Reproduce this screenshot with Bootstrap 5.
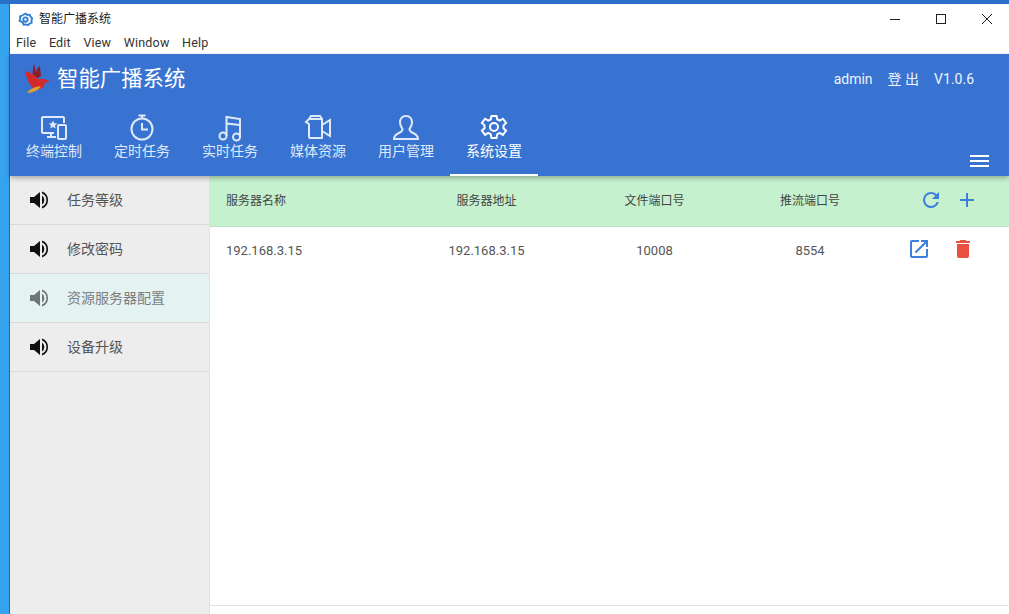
<!DOCTYPE html>
<html lang="zh">
<head>
<meta charset="utf-8">
<title>智能广播系统</title>
<link href="https://cdn.jsdelivr.net/npm/bootstrap@5.3.0/dist/css/bootstrap.min.css" rel="stylesheet">
<style>
html,body{height:614px;overflow:hidden}
body{background:#36a3ee;font-family:Roboto,"Noto Sans CJK SC",sans-serif;color:#333;padding:4px 0 0 10px}
body::before{content:"";position:absolute;left:0;right:0;top:0;height:4px;background:#2a6fc9}
.app-win{height:610px;background:#fff;box-shadow:-1px 0 0 #1d6aa8;position:relative}
.title-bar{height:30px;font-size:12px;color:#222}
.title-bar .win-title{margin-left:6px;line-height:30px}
.win-btns{margin-left:auto;width:138px}
.win-btns span{width:46px;height:30px;padding-left:2px}
.menu-bar{height:20px;font-size:12.5px;color:#333;padding-left:6px;gap:12.5px;line-height:18px;letter-spacing:.2px}
.app-head{height:122px;background:#3873d1;color:#fff;box-shadow:0 2px 5px rgba(0,0,0,.3);position:relative;z-index:2}
.head-top{height:52px;padding:0 35px 0 14px}
.head-top .brand{font-size:21.4px;margin-left:5px;line-height:50px}
.head-info{margin-left:auto;font-size:14px;gap:15px;line-height:50px;color:#eef4fd}
.tab-row{height:70px;position:relative}
.tab-item{width:88px;height:70px;font-size:14px;color:#dfe9f8;text-align:center;padding-top:7px;line-height:16px}
.tab-item svg{display:block;margin:0 auto;width:30px;height:30px}
.tab-item.on{color:#fff;border-bottom:2px solid #fff}
.burger{position:absolute;right:20px;top:49px;width:19px;height:12px;border-top:2px solid #fff;border-bottom:2px solid #fff}
.burger::after{content:"";position:absolute;left:0;right:0;top:3px;height:2px;background:#fff}
.app-main{height:438px}
.side-nav{width:200px;background:#ededed;border-right:1px solid #e2e2e2;flex:none}
.side-row{height:49px;border-bottom:1px solid #d9d9d9;font-size:14px;color:#555;padding-left:17px}
.side-row svg{width:24px;height:24px;margin-right:16px;flex:none}
.side-row.on{background:#e4f2f2;color:#7d7d7d}
.side-row.on svg{opacity:.55}
.data-pane{position:relative;border-bottom:1px solid #e3e3e3;margin-bottom:8px}
.data-head,.data-line{font-size:12px;color:#555}
.data-head{height:51px;background:#c5f1ce;border-bottom:1px solid #bfe3c7;color:#444}
.data-line{height:47px;font-size:13px;color:#555}
.c-a{width:200px;padding-left:16px;flex:none}
.c-b{width:153px;text-align:center;flex:none}
.c-c{width:183px;text-align:center;flex:none}
.c-d{width:128px;text-align:center;flex:none}
.c-e{flex:1;position:relative;height:24px}
.c-e svg{position:absolute;top:-1px;width:24px;height:24px}
.data-line .c-e svg{top:-2px}
</style>
</head>
<body>
<div class="app-win d-flex flex-column">
  <div class="title-bar d-flex align-items-center ps-2">
    <svg width="15" height="15" viewBox="0 0 24 24" fill="none" stroke="#2f7fd6" stroke-width="3"><path d="M12 2.500l3 2.200 3.600-.4 1.500 3.300 2.600 2.600-1.200 3.400.4 3.600-3.400 1.300-2.500 2.500-3.400-1.200-3.600.4-1.400-3.400L2.500 14l1.100-3.400L3.300 7l3.400-1.400z"/><circle cx="12" cy="12" r="3.500"/></svg>
    <span class="win-title">智能广播系统</span>
    <div class="win-btns d-flex">
      <span class="d-flex align-items-center justify-content-center"><svg width="12" height="12" viewBox="0 0 12 12"><path d="M1 6.500h10" stroke="#222" stroke-width="1"/></svg></span>
      <span class="d-flex align-items-center justify-content-center"><svg width="12" height="12" viewBox="0 0 12 12"><rect x="1.500" y="1.500" width="9" height="9" fill="none" stroke="#222" stroke-width="1"/></svg></span>
      <span class="d-flex align-items-center justify-content-center"><svg width="12" height="12" viewBox="0 0 12 12"><path d="M1 1l10 10M11 1L1 11" stroke="#222" stroke-width="1"/></svg></span>
    </div>
  </div>
  <div class="menu-bar d-flex"><span>File</span><span>Edit</span><span>View</span><span>Window</span><span>Help</span></div>
  <div class="app-head">
    <div class="head-top d-flex">
      <svg width="28" height="32" viewBox="0 0 28 32" class="mt-2"><path d="M10 2c1 3 1.500 5 2 8 1-3 2-5 4-6 0 4 1 7 1 10-3 3-6 2-8 0C8 10 9 6 10 2z" fill="#8c1f2b"/><path d="M1 9c5 1 10 4 13 8l6 0 6 2-5 2c-1 5-5 7-10 7C6 24 2 16 1 9z" fill="#d12b2b"/><path d="M3 31c3-4 7-6 14-7-2 4-8 7-14 7z" fill="#e8a02a"/></svg>
      <span class="brand">智能广播系统</span>
      <div class="head-info d-flex"><span>admin</span><span>登 出</span><span>V1.0.6</span></div>
    </div>
    <div class="tab-row d-flex">
      <div class="tab-item"><svg viewBox="0 0 30 30" fill="none" stroke="#dfe9f8" stroke-width="2"><path d="M15 20H4a1 1 0 0 1-1-1V5a1 1 0 0 1 1-1h20a1 1 0 0 1 1 1v5M8 24h9M12 20v4"/><rect x="19" y="12" width="8" height="14" rx="1"/><path d="M14 7.500l1.300 2.800 3 .3-2.300 2 .7 3-2.700-1.600-2.700 1.600.7-3-2.300-2 3-.3z" fill="#dfe9f8" stroke="none"/></svg>终端控制</div>
      <div class="tab-item"><svg viewBox="0 0 30 30" fill="none" stroke="#dfe9f8" stroke-width="2"><circle cx="15" cy="16" r="10.500"/><path d="M11.500 2.500h7M15 3v2.500M15 10v6.500h6"/></svg>定时任务</div>
      <div class="tab-item"><svg viewBox="0 0 30 30" fill="none" stroke="#dfe9f8" stroke-width="2"><circle cx="8" cy="23" r="3.500"/><circle cx="21.500" cy="24" r="3.500"/><path d="M11.500 23V4l13.500 2v18M11.500 10.500L25 12"/></svg>实时任务</div>
      <div class="tab-item"><svg viewBox="0 0 30 30" fill="none" stroke="#dfe9f8" stroke-width="2"><path d="M6 6h13v19H7a1 1 0 0 1-1-1V11L3 9zM6 6l2-3h9l2 3M19 12l8-5v16l-8-5"/></svg>媒体资源</div>
      <div class="tab-item"><svg viewBox="0 0 30 30" fill="none" stroke="#dfe9f8" stroke-width="2"><path d="M15 3c-4 0-6 3-6 6.500 0 3 1.500 5 2.500 6.500 0 2-1 3-3.500 4-3 1.300-5 3-5 6h24c0-3-2-4.700-5-6-2.500-1-3.500-2-3.500-4 1-1.500 2.500-3.500 2.500-6.500C21 6 19 3 15 3z"/></svg>用户管理</div>
      <div class="tab-item on"><svg viewBox="0 0 30 30" fill="none" stroke="#fff" stroke-width="2"><path d="M12.500 3h5l.8 3.500 2.500 1.100 3.100-1.900 3.200 4.200-2.600 2.500v2.800l2.600 2.500-3.200 4.200-3.100-1.900-2.500 1.100-.8 3.900h-5l-.8-3.900-2.500-1.100-3.100 1.900-3.200-4.200 2.600-2.500v-2.800L2.900 9.900l3.200-4.200 3.100 1.900 2.500-1.100z"/><circle cx="15" cy="14" r="4"/></svg>系统设置</div>
      <div class="burger"></div>
    </div>
  </div>
  <div class="app-main d-flex">
    <div class="side-nav">
      <div class="side-row d-flex align-items-center"><svg viewBox="0 0 24 24"><use href="#spk"/></svg>任务等级</div>
      <div class="side-row d-flex align-items-center"><svg viewBox="0 0 24 24"><use href="#spk"/></svg>修改密码</div>
      <div class="side-row on d-flex align-items-center"><svg viewBox="0 0 24 24"><use href="#spk"/></svg>资源服务器配置</div>
      <div class="side-row d-flex align-items-center"><svg viewBox="0 0 24 24"><use href="#spk"/></svg>设备升级</div>
    </div>
    <div class="data-pane flex-grow-1">
      <div class="data-head d-flex align-items-center">
        <div class="c-a">服务器名称</div><div class="c-b">服务器地址</div><div class="c-c">文件端口号</div><div class="c-d">推流端口号</div>
        <div class="c-e">
          <svg style="left:45px" viewBox="0 0 24 24"><path d="M17.650 6.350A7.950 7.950 0 0 0 12 4a8 8 0 1 0 7.730 10h-2.080A6 6 0 1 1 12 6c1.660 0 3.140.69 4.220 1.780L13 11h7V4z" fill="#3c80db"/></svg>
          <svg style="left:81px" viewBox="0 0 24 24"><path d="M19 13h-6v6h-2v-6H5v-2h6V5h2v6h6z" fill="#3c80db"/></svg>
        </div>
      </div>
      <div class="data-line d-flex align-items-center">
        <div class="c-a">192.168.3.15</div><div class="c-b">192.168.3.15</div><div class="c-c">10008</div><div class="c-d">8554</div>
        <div class="c-e">
          <svg style="left:33px" viewBox="0 0 24 24"><path d="M19 19H5V5h7V3H5a2 2 0 0 0-2 2v14a2 2 0 0 0 2 2h14a2 2 0 0 0 2-2v-7h-2zM14 3v2h3.590l-9.830 9.830 1.410 1.410L19 6.410V10h2V3z" fill="#3c80db"/></svg>
          <svg style="left:77px" viewBox="0 0 24 24"><path d="M6 19a2 2 0 0 0 2 2h8a2 2 0 0 0 2-2V7H6zM19 4h-3.500l-1-1h-5l-1 1H5v2h14z" fill="#e8503f"/></svg>
        </div>
      </div>
    </div>
  </div>
</div>
<svg width="0" height="0" class="position-absolute"><defs><g id="spk"><path d="M3 9v6h4l6 5V4L7 9z" fill="#111"/><path d="M15 7.500a5.500 5.500 0 0 1 0 9z" fill="#111"/><path d="M15 3.500a9 9 0 0 1 0 17v-2a7 7 0 0 0 0-13z" fill="#111"/></g></defs></svg>
<script src="https://cdn.jsdelivr.net/npm/bootstrap@5.3.0/dist/js/bootstrap.bundle.min.js"></script>
</body>
</html>
